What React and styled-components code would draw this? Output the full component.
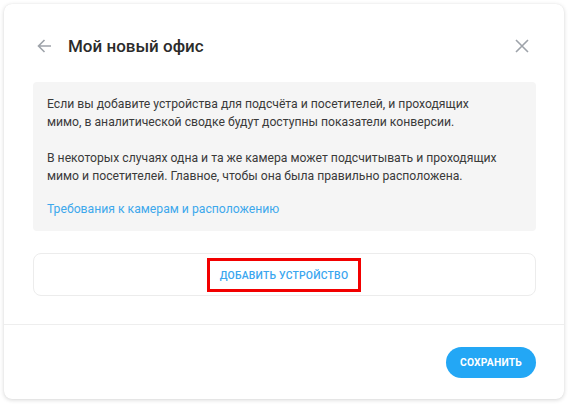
import React from "react";
import styled, { createGlobalStyle } from "styled-components";

const Global = createGlobalStyle`
  html, body { margin: 0; padding: 0; background: #ffffff; }
  body { font-family: Roboto, "Noto Sans", "Liberation Sans", sans-serif; color: #333; }
  * { box-sizing: border-box; }
`;

const Page = styled.div`
  padding: 4px 7px 6px 4px;
`;

const Card = styled.div`
  width: 560px;
  height: 395px;
  background: #fff;
  border-radius: 8px;
  box-shadow: 0 1px 4px rgba(0, 0, 0, 0.16), 0 0 1px rgba(0, 0, 0, 0.08);
  display: flex;
  flex-direction: column;
`;

const Header = styled.div`
  display: flex;
  align-items: center;
  height: 78px;
  padding: 24px 34px 18px 32px;
`;

const IconButton = styled.button`
  display: flex;
  align-items: center;
  justify-content: center;
  background: none;
  border: 0;
  padding: 0;
  cursor: pointer;
  color: #9ea3aa;
  width: ${(p) => p.$size}px;
  height: ${(p) => p.$size}px;
`;

const Title = styled.h1`
  margin: 0 0 0 16px;
  flex: 1;
  font-size: 17px;
  font-weight: 500;
  color: #2b2b2b;
`;

const Body = styled.div`
  padding: 0 28px 0 29px;
  display: flex;
  flex-direction: column;
  gap: 22px;
`;

const InfoBox = styled.div`
  background: #f5f5f5;
  border-radius: 4px;
  height: 149px;
  padding: 13px 14px 0 14px;
`;

const Para = styled.p`
  margin: 0 0 18px 0;
  font-size: 12.2px;
  line-height: 18px;
  color: #3a3a3a;
`;

const Link = styled.a`
  display: block;
  margin-top: -3px;
  font-size: 12.2px;
  line-height: 18px;
  color: #3da8ec;
  text-decoration: none;
`;

const DeviceBox = styled.div`
  height: 43px;
  border: 1px solid #ececec;
  border-radius: 8px;
  display: flex;
  align-items: center;
  justify-content: center;
`;

const AddButton = styled.button`
  height: 34px;
  padding: 0 10px 0 10px;
  border: 3px solid #f20000;
  background: transparent;
  font-family: Roboto, "Noto Sans", "Liberation Sans", sans-serif;
  font-size: 10.4px;
  font-weight: 500;
  letter-spacing: 0.2px;
  color: #3aa6ef;
  text-transform: uppercase;
  cursor: pointer;
  margin-left: -1px;
  margin-top: 1px;
`;

const Divider = styled.div`
  height: 1px;
  background: #eeeeee;
  margin-top: 28px;
`;

const Footer = styled.div`
  display: flex;
  justify-content: flex-end;
  padding: 22px 28px 0 0;
`;

const SaveButton = styled.button`
  width: 90px;
  height: 31px;
  border: 0;
  border-radius: 16px;
  background: #23a7f5;
  color: #fff;
  font-family: Roboto, "Noto Sans", "Liberation Sans", sans-serif;
  font-size: 10.3px;
  font-weight: 700;
  letter-spacing: 0.2px;
  text-transform: uppercase;
  cursor: pointer;
`;

export default function App() {
  return (
    <>
      <Global />
      <Page>
        <Card>
          <Header>
            <IconButton $size={16} aria-label="back">
              <svg width="15" height="14" viewBox="0 0 15 14" fill="none">
                <path d="M14 7H1.5M7.5 1L1.5 7l6 6" stroke="currentColor" strokeWidth="1.6" />
              </svg>
            </IconButton>
            <Title>Мой новый офис</Title>
            <IconButton $size={16} aria-label="close">
              <svg width="14" height="14" viewBox="0 0 14 14" fill="none">
                <path d="M1 1l12 12M13 1L1 13" stroke="currentColor" strokeWidth="1.6" />
              </svg>
            </IconButton>
          </Header>
          <Body>
            <InfoBox>
              <Para>
                Если вы добавите устройства для подсчёта и посетителей, и проходящих
                <br />
                мимо, в аналитической сводке будут доступны показатели конверсии.
              </Para>
              <Para>
                В некоторых случаях одна и та же камера может подсчитывать и проходящих
                <br />
                мимо и посетителей. Главное, чтобы она была правильно расположена.
              </Para>
              <Link href="#">Требования к камерам и расположению</Link>
            </InfoBox>
            <DeviceBox>
              <AddButton>Добавить устройство</AddButton>
            </DeviceBox>
          </Body>
          <Divider />
          <Footer>
            <SaveButton>Сохранить</SaveButton>
          </Footer>
        </Card>
      </Page>
    </>
  );
}
